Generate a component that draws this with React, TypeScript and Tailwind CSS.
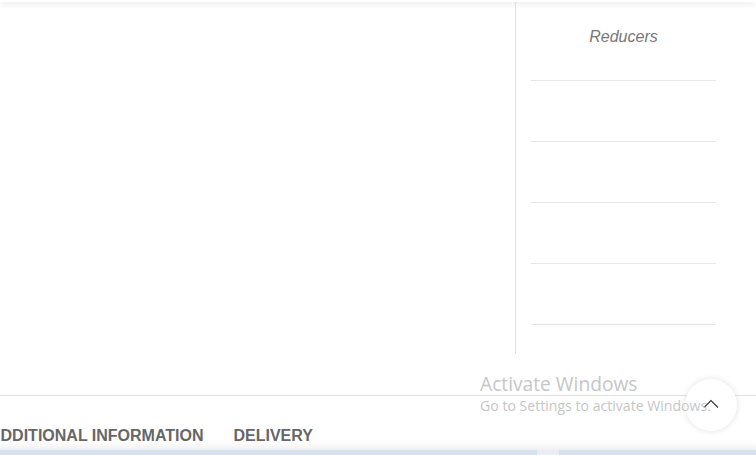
import React from "react";

export default function App() {
  return (
    <div className="relative w-[756px] h-[455px] overflow-hidden bg-white font-['Liberation_Sans',Arial,sans-serif]">
      <div className="relative z-10 h-[2px] bg-white shadow-[0_1px_6px_rgba(0,0,0,0.18)]" />
      <div className="flex">
        <div className="w-[516px] h-[352px] border-r border-[#e3e3e3]" />
        <div className="flex-1 pl-[15px]">
          <div className="w-[185px]">
            <div className="h-[79px] pt-[26px] border-b border-[#e6e6e6] text-center text-[16px] leading-[18px] italic text-[#777]">
              Reducers
            </div>
            <div className="h-[61px] border-b border-[#e6e6e6]" />
            <div className="h-[61px] border-b border-[#e6e6e6]" />
            <div className="h-[61px] border-b border-[#e6e6e6]" />
            <div className="h-[61px] border-b border-[#e6e6e6]" />
          </div>
        </div>
      </div>
      <div className="h-[41px]" />
      <div className="border-t border-[#e3e3e3]" />
      <div className="h-[31px]" />
      <div className="flex gap-[30px] ml-[-11px] text-[16px] leading-[18px] font-bold text-[#666] whitespace-nowrap">
        <span>ADDITIONAL INFORMATION</span>
        <span>DELIVERY</span>
      </div>
      <div className="absolute left-0 right-0 top-[442px] h-[8px] bg-gradient-to-b from-white to-[#f0f0f0]" />
      <div className="absolute left-0 right-0 top-[450px] h-[5px] bg-[#d3e2ee] flex">
        <div className="ml-[537px] w-[22px] bg-[#e8eef7]" />
      </div>
      <div className="absolute left-[685px] top-[379px] w-[52px] h-[52px] rounded-full bg-white shadow-[0_0_6px_rgba(0,0,0,0.12)] flex items-center justify-center">
        <svg width="16" height="10" viewBox="0 0 16 10" className="mt-[-2px]">
          <path d="M1 8.5 L8 1.5 L15 8.5" fill="none" stroke="#333" strokeWidth="1.1" />
        </svg>
      </div>
      <div className="absolute left-[480px] top-[371px] text-[#c6c6c6] font-['Open_Sans',sans-serif] pointer-events-none">
        <div className="text-[19.2px] leading-[26px]">Activate Windows</div>
        <div className="text-[14.1px] leading-[20px] mt-[-1px]">Go to Settings to activate Windows.</div>
      </div>
    </div>
  );
}
